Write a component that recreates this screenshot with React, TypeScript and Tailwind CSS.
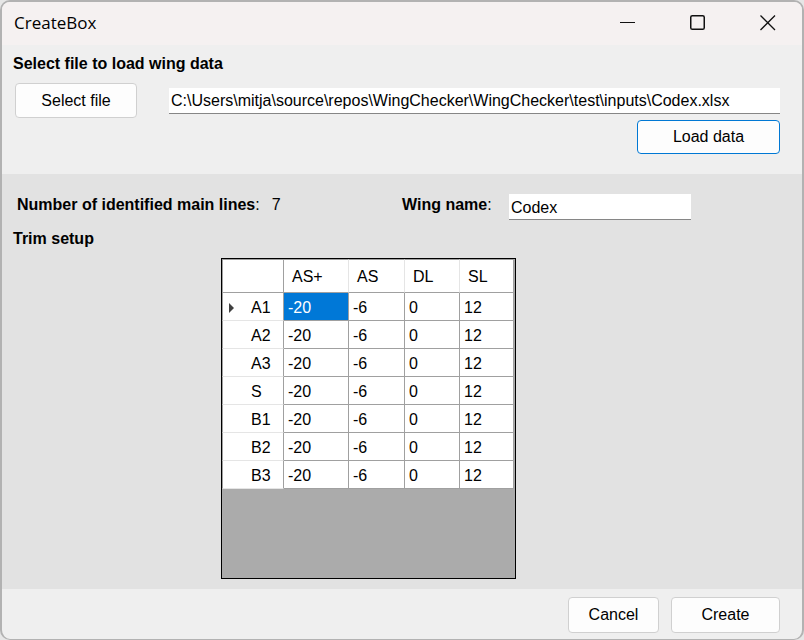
import { useState } from "react";

type TrimRow = { line: string; values: number[] };

const columns = ["AS+", "AS", "DL", "SL"];

const initialRows: TrimRow[] = ["A1", "A2", "A3", "S", "B1", "B2", "B3"].map((line) => ({
  line,
  values: [-20, -6, 0, 12],
}));

function TitleBar() {
  return (
    <header className="flex h-[43px] items-center justify-between bg-[#f5f1f1] pb-[2px] pl-3 pr-[26px]">
      <h1 className="font-['Open_Sans',sans-serif] text-[17px] leading-6">CreateBox</h1>
      <div className="flex gap-[54px]">
        <button type="button" aria-label="Minimize">
          <svg width="16" height="16" viewBox="0 0 16 16" stroke="#111" fill="none">
            <path d="M0 7.5H15" />
          </svg>
        </button>
        <button type="button" aria-label="Maximize">
          <svg width="16" height="16" viewBox="0 0 16 16" stroke="#111" strokeWidth="1.5" fill="none">
            <rect x="0.75" y="0.75" width="13.5" height="13.5" rx="1.6" />
          </svg>
        </button>
        <button type="button" aria-label="Close">
          <svg width="16" height="16" viewBox="0 0 16 16" stroke="#111" strokeWidth="1.3" fill="none">
            <path d="M0.5 0.5L15 15M15 0.5L0.5 15" />
          </svg>
        </button>
      </div>
    </header>
  );
}

function TrimTable({ rows }: { rows: TrimRow[] }) {
  const [selected, setSelected] = useState("0-0");
  return (
    <div className="ml-[208px] h-[321px] w-[295px] border border-black bg-[#ababab]">
      <table className="w-[292px] table-fixed border-separate border-spacing-0 text-left">
        <colgroup>
          <col className="w-[62px]" />
          <col className="w-[65px]" />
          <col className="w-[56px]" />
          <col className="w-[55px]" />
          <col className="w-[54px]" />
        </colgroup>
        <thead>
          <tr className="h-[34px] bg-white">
            <td className="border-b border-l border-r border-t border-[#a0a0a0]" />
            {columns.map((name) => (
              <th
                key={name}
                scope="col"
                className="border-b border-r border-t border-b-[#a0a0a0] border-r-[#e5e5e5] border-t-[#a0a0a0] p-0 pl-2 pt-[2px] font-normal last:border-r-[#a0a0a0]"
              >
                {name}
              </th>
            ))}
          </tr>
        </thead>
        <tbody>
          {rows.map((row, r) => (
            <tr key={row.line} className="h-7 bg-white">
              <th
                scope="row"
                className="border-b border-l border-r border-b-[#e5e5e5] border-l-[#a0a0a0] border-r-[#a0a0a0] p-0 pt-[3px] font-normal"
              >
                <div className="flex items-center pl-[6px]">
                  <span className="w-[22px]">
                    {selected.startsWith(`${r}-`) && (
                      <svg width="5" height="10" viewBox="0 0 5 10" fill="#404040">
                        <path d="M0 0L5 5L0 10Z" />
                      </svg>
                    )}
                  </span>
                  {row.line}
                </div>
              </th>
              {row.values.map((value, c) => (
                <td
                  key={columns[c]}
                  onClick={() => setSelected(`${r}-${c}`)}
                  className={
                    selected === `${r}-${c}`
                      ? "border-b border-r border-[#a0a0a0] bg-[#0078d7] p-0 pl-1 pt-[2px] text-white"
                      : "border-b border-r border-[#a0a0a0] p-0 pl-1 pt-[2px]"
                  }
                >
                  {value}
                </td>
              ))}
            </tr>
          ))}
        </tbody>
      </table>
    </div>
  );
}

export default function App() {
  const [path, setPath] = useState(
    "C:\\Users\\mitja\\source\\repos\\WingChecker\\WingChecker\\test\\inputs\\Codex.xlsx",
  );
  const [wing, setWing] = useState("Codex");

  return (
    <div className="flex min-h-screen flex-col bg-[#e6e6e6] font-['Liberation_Sans',Arial,sans-serif] text-[16px] leading-5 text-black">
      <main className="flex grow flex-col overflow-hidden rounded-[10px] border-2 border-b border-[#b2b2b2] bg-[#efefef]">
        <TitleBar />
        <section className="pb-5 pl-[11px] pr-[22px] pt-[9px]">
          <label htmlFor="path" className="block font-bold">
            Select file to load wing data
          </label>
          <div className="mt-[9px] flex items-center gap-8 pl-[2px]">
            <button type="button" className="h-[35px] w-[122px] rounded border border-[#d0d0d0] bg-[#fdfdfd]">
              Select file
            </button>
            <input
              id="path"
              value={path}
              onChange={(e) => setPath(e.target.value)}
              className="h-[26px] min-w-0 grow border-b border-[#868686] bg-white px-[2px] pt-px outline-none"
            />
          </div>
          <div className="mt-[2px] flex justify-end">
            <button type="button" className="h-[34px] w-[143px] rounded border border-[#0078d4] bg-[#fdfdfd]">
              Load data
            </button>
          </div>
        </section>
        <section className="grow bg-[#e2e2e2] px-[11px] pb-[10px] pt-5">
          <div className="flex items-start">
            <dl className="flex w-[389px] gap-3 pl-1 pt-px">
              <dt>
                <b>Number of identified main lines</b>:
              </dt>
              <dd>7</dd>
            </dl>
            <label htmlFor="wing" className="w-[107px] pt-px">
              <b>Wing name</b>:
            </label>
            <input
              id="wing"
              value={wing}
              onChange={(e) => setWing(e.target.value)}
              className="h-[26px] w-[182px] border-b border-[#868686] bg-white px-[2px] pt-[2px] outline-none"
            />
          </div>
          <h2 className="mb-[9px] mt-[9px] font-bold">Trim setup</h2>
          <TrimTable rows={initialRows} />
        </section>
        <footer className="flex justify-end gap-3 pb-[6px] pr-[22px] pt-2">
          <button type="button" className="h-9 w-[91px] rounded border border-[#d0d0d0] bg-[#fdfdfd]">
            Cancel
          </button>
          <button type="button" className="h-9 w-[109px] rounded border border-[#d0d0d0] bg-[#fdfdfd]">
            Create
          </button>
        </footer>
      </main>
    </div>
  );
}
